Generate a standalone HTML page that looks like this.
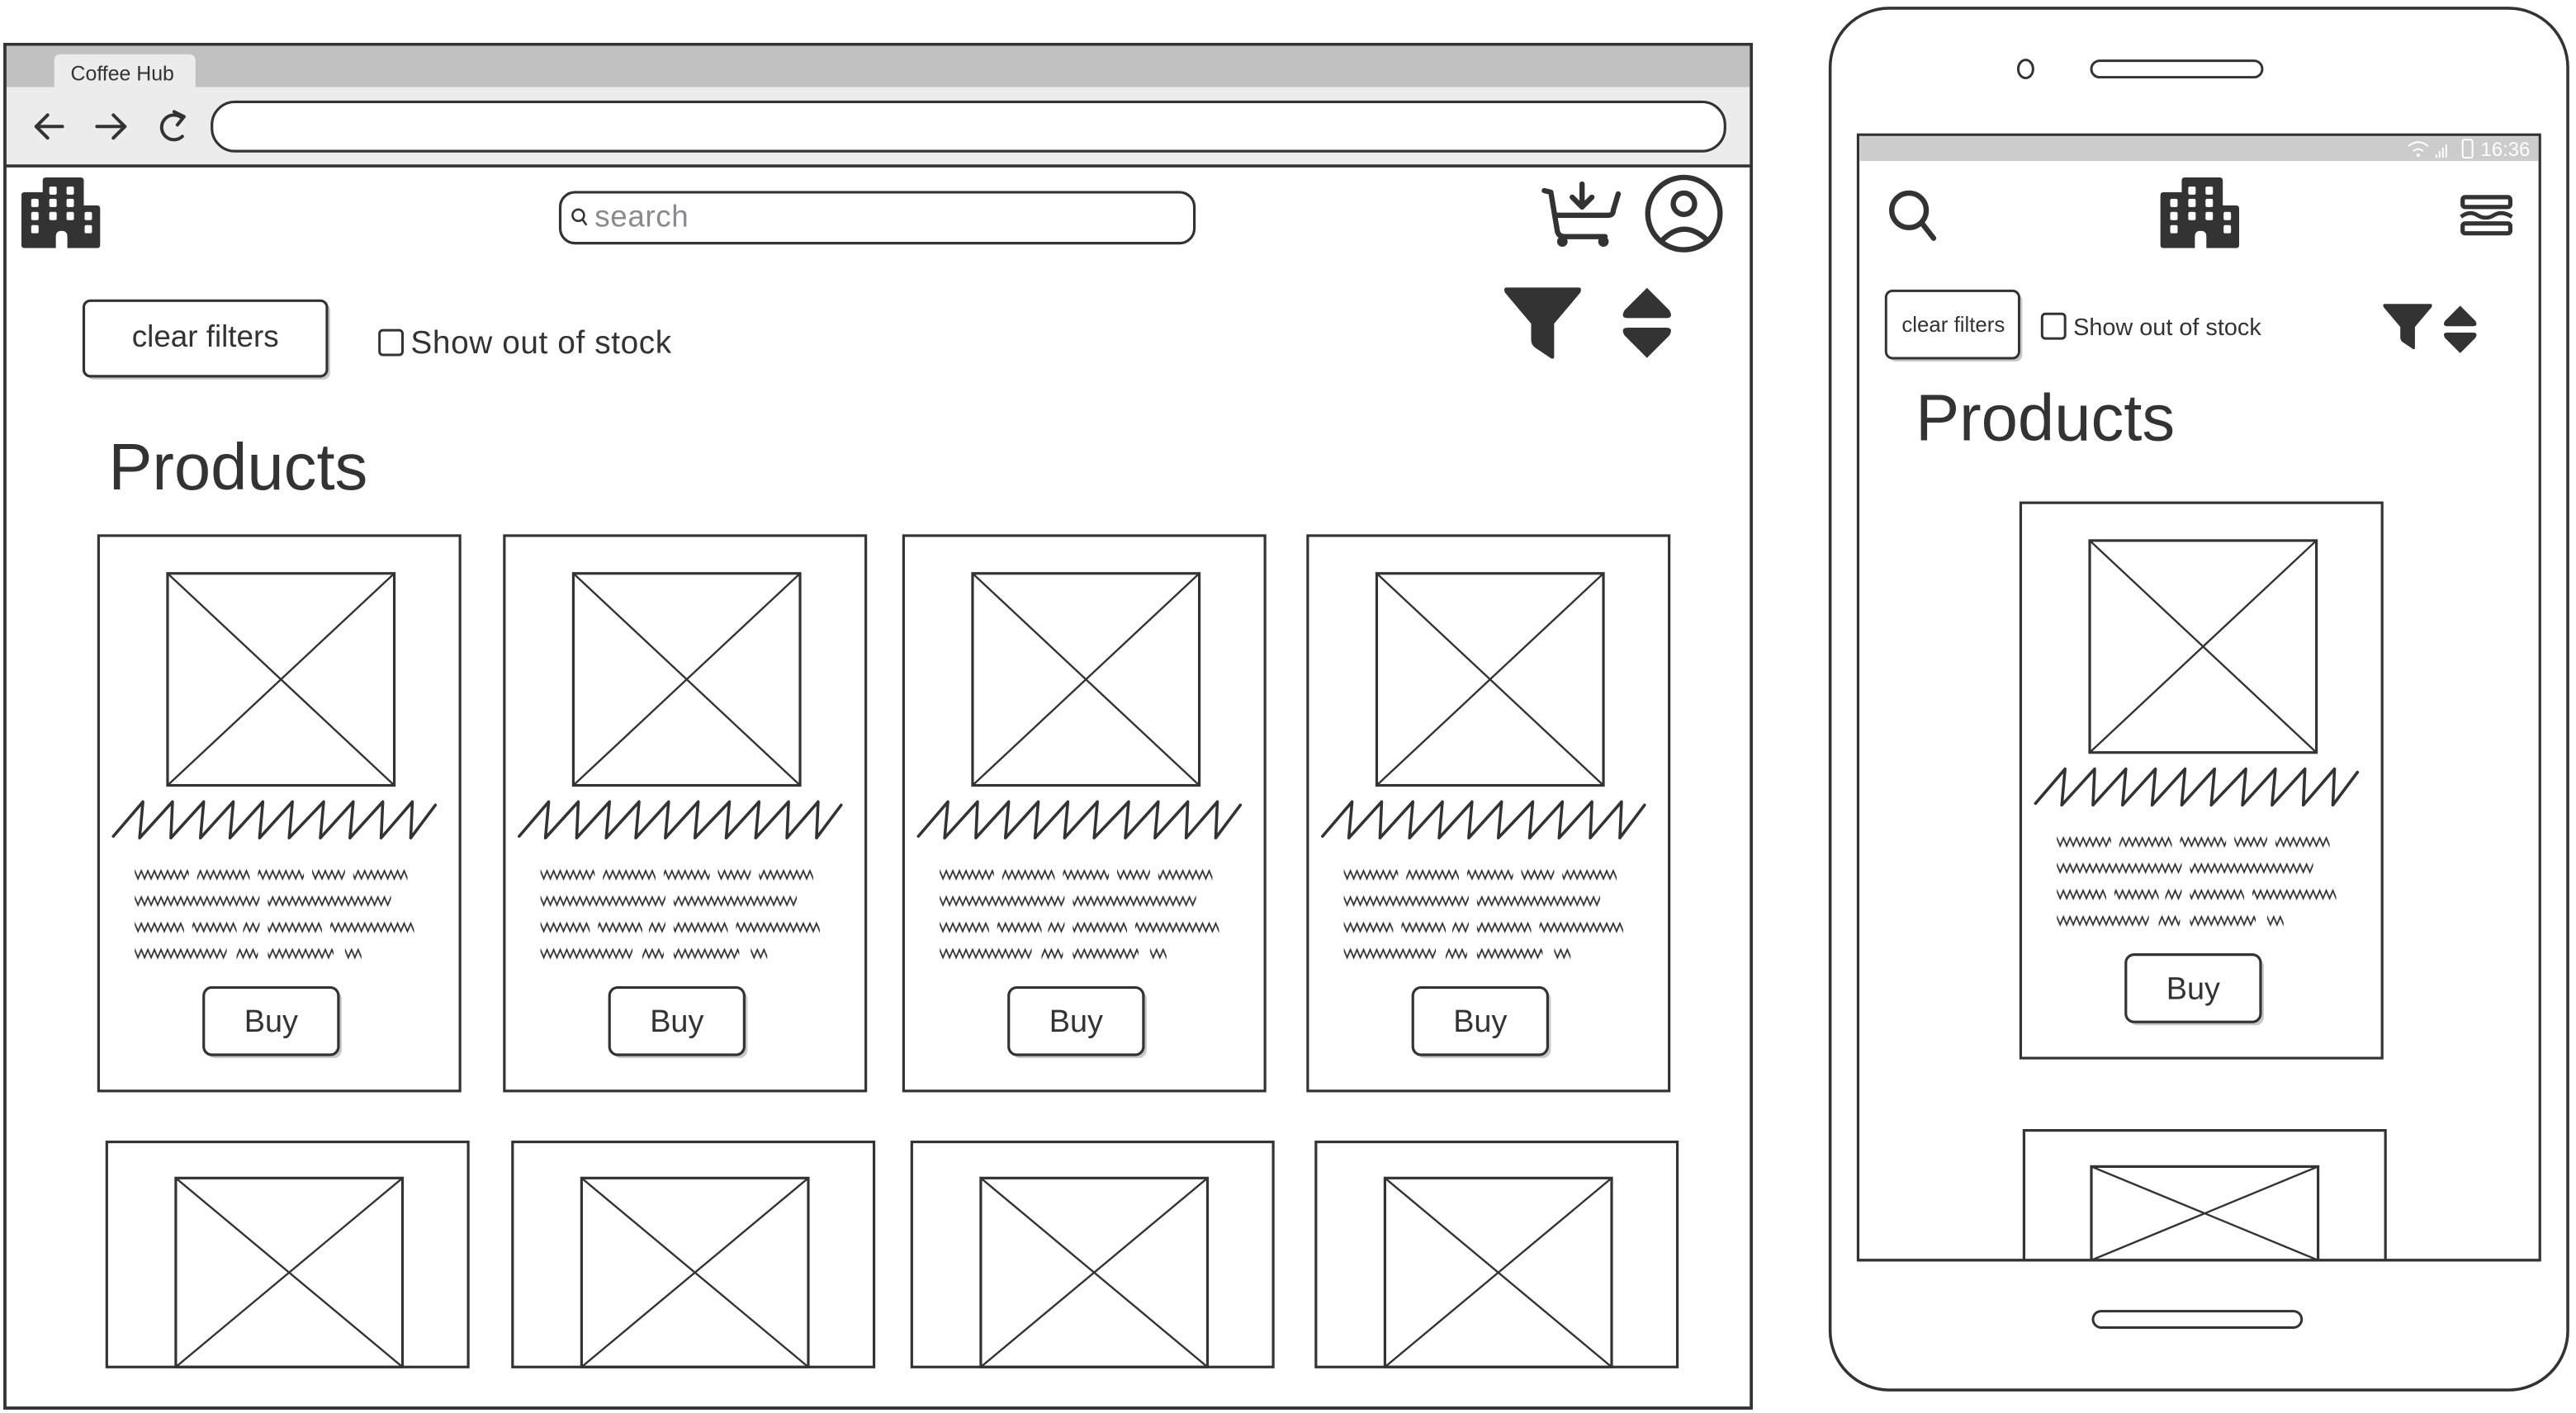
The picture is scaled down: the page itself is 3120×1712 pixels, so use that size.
<!DOCTYPE html>
<html><head><meta charset="utf-8"><style>
html,body{margin:0;padding:0;background:#fff;}
svg{display:block;}
text{font-family:"Liberation Sans",sans-serif;fill:#333;}
</style></head><body>
<svg width="3120" height="1712" viewBox="0 0 1568 860" preserveAspectRatio="none" xmlns="http://www.w3.org/2000/svg">
<defs>
<pattern id="zz" x="0" y="3" width="4" height="8" patternUnits="userSpaceOnUse">
<path d="M-0.5,7 L2,1 L4.5,7" fill="none" stroke="#333" stroke-width="0.9"/>
</pattern>
<symbol id="bld" viewBox="0 0 48 43">
<path d="M13,2 Q13,0 15,0 L36,0 Q38,0 38,2 L38,17 L46,17 Q48,17 48,19 L48,41 Q48,43 46,43 L28,43 L28,36 Q28,32.5 24.5,32.5 Q21,32.5 21,36 L21,43 L2,43 Q0,43 0,41 L0,11 Q0,9 2,9 L13,9 Z" fill="#333"/>
<g fill="#fff">
<rect x="17" y="5.5" width="4.5" height="5" rx="1"/><rect x="27.5" y="5.5" width="4.5" height="5" rx="1"/>
<rect x="6" y="13" width="4.5" height="5" rx="1"/><rect x="17" y="13" width="4.5" height="5" rx="1"/><rect x="27.5" y="13" width="4.5" height="5" rx="1"/>
<rect x="6" y="21" width="4.5" height="5" rx="1"/><rect x="17" y="21" width="4.5" height="5" rx="1"/><rect x="27.5" y="21" width="4.5" height="5" rx="1"/><rect x="38.5" y="21" width="4.5" height="5" rx="1"/>
<rect x="6" y="29" width="4.5" height="5" rx="1"/><rect x="38.5" y="29" width="4.5" height="5" rx="1"/>
</g>
</symbol>
<symbol id="funnel" viewBox="0 0 48 44" overflow="visible">
<path d="M2,0 L46,0 Q48,0 47,3 L31,22 L31,42 Q31,44 29,43 L20,37 Q17,35 17,32 L17,22 L1,3 Q0,0 2,0 Z" fill="#333"/>
</symbol>
<symbol id="sort" viewBox="0 0 32 44" overflow="visible">
<path d="M16,0 L30,14 Q33,19 28,19 L4,19 Q-1,19 2,14 Z M4,25 L28,25 Q33,25 30,30 L16,44 L2,30 Q-1,25 4,25 Z" fill="#333"/>
</symbol>
<g id="txt">
<rect x="22" y="203" width="33" height="8" fill="url(#zz)"/><rect x="60" y="203" width="32" height="8" fill="url(#zz)"/><rect x="97" y="203" width="28" height="8" fill="url(#zz)"/><rect x="130" y="203" width="20" height="8" fill="url(#zz)"/><rect x="155" y="203" width="33" height="8" fill="url(#zz)"/>
<rect x="22" y="219" width="76" height="8" fill="url(#zz)"/><rect x="103" y="219" width="75" height="8" fill="url(#zz)"/>
<rect x="22" y="235" width="30" height="8" fill="url(#zz)"/><rect x="57" y="235" width="27" height="8" fill="url(#zz)"/><rect x="88" y="235" width="10" height="8" fill="url(#zz)"/><rect x="103" y="235" width="33" height="8" fill="url(#zz)"/><rect x="141" y="235" width="51" height="8" fill="url(#zz)"/>
<rect x="22" y="251" width="56" height="8" fill="url(#zz)"/><rect x="84" y="251" width="13" height="8" fill="url(#zz)"/><rect x="103" y="251" width="40" height="8" fill="url(#zz)"/><rect x="150" y="251" width="10" height="8" fill="url(#zz)"/>
</g>
<g id="card">
<rect x="0" y="0" width="220" height="338" fill="#fff" stroke="#333" stroke-width="1.6"/>
<rect x="42" y="23" width="138" height="129" fill="none" stroke="#333" stroke-width="1.6"/>
<path d="M42,23 L180,152 M180,23 L42,152" stroke="#333" stroke-width="1.2"/>
<path d="M9,183 L27,162 L25,184 L45,162 L44,184 L64,162 L62,184 L82,162 L80,184 L100,162 L98,184 L118,162 L116,184 L137,162 L135,184 L155,162 L153,184 L173,162 L172,184 L191,162 L190,184 L205,164" fill="none" stroke="#333" stroke-width="1.8" stroke-linejoin="round" stroke-linecap="round"/>
<use href="#txt"/>
<rect x="66" y="277" width="82" height="41" rx="5" fill="#c8c8c8"/>
<rect x="64" y="275" width="82" height="41" rx="5" fill="#fff" stroke="#333" stroke-width="1.6"/>
<text x="105" y="302" font-size="19" text-anchor="middle">Buy</text>
</g>
<g id="card2">
<rect x="0" y="0" width="220" height="137" fill="#fff" stroke="#333" stroke-width="1.6"/>
<rect x="42" y="22" width="138" height="115" fill="none" stroke="#333" stroke-width="1.6"/>
<path d="M42,22 L180,137 M180,22 L42,137" stroke="#333" stroke-width="1.2"/>
</g>
</defs>

<rect x="3" y="27" width="1063" height="830" fill="#fff" stroke="#333" stroke-width="1.8"/>
<rect x="4" y="28" width="1061" height="25" fill="#c0c0c0"/>
<path d="M33,53 L33,37 Q33,33 37,33 L115,33 Q119,33 119,37 L119,53 Z" fill="#ececec"/>
<text x="43" y="49" font-size="12.5">Coffee Hub</text>
<rect x="4" y="53" width="1061" height="48" fill="#ececec"/>
<line x1="3" y1="101" x2="1066" y2="101" stroke="#333" stroke-width="1.8"/>
<rect x="129" y="62" width="921" height="30" rx="14" fill="#fff" stroke="#333" stroke-width="1.6"/>
<path d="M38,77 L22,77 M29,70 L22,77 L29,84" fill="none" stroke="#333" stroke-width="2" stroke-linecap="round" stroke-linejoin="round"/>
<path d="M59,77 L76,77 M69,70 L76,77 L69,84" fill="none" stroke="#333" stroke-width="2" stroke-linecap="round" stroke-linejoin="round"/>
<path d="M111,72 A7.5,7.5 0 1 0 111,83" fill="none" stroke="#333" stroke-width="2" stroke-linecap="round"/>
<path d="M106,68 L112,71 L108,76" fill="none" stroke="#333" stroke-width="2" stroke-linecap="round" stroke-linejoin="round"/>

<use href="#bld" x="13" y="108" width="48" height="43"/>
<rect x="341" y="117" width="386" height="31" rx="9" fill="#fff" stroke="#333" stroke-width="1.6"/>
<circle cx="352" cy="131" r="3.5" fill="none" stroke="#333" stroke-width="1.3"/>
<line x1="354.5" y1="133.5" x2="357" y2="137" stroke="#333" stroke-width="1.3"/>
<text x="362" y="138" font-size="18.5" style="fill:#8a8a90" letter-spacing="0.3">search</text>

<g fill="none" stroke="#333" stroke-width="3.2" stroke-linecap="round" stroke-linejoin="round">
<path d="M940,116 L944,117 L948,141 Q949,144 952,144 L977,144"/>
<path d="M947,131 L979,131 Q982,131 982,128 L985,118"/>
<path d="M963,112 L963,125 M957,120 L963,126 L969,120"/>
<path d="M1003,130 A22,22 0 1 0 1047,130 A22,22 0 1 0 1003,130 Z"/>
<circle cx="1025" cy="124" r="6.5"/>
<path d="M1012,146 Q1025,133 1039,146"/>
</g>
<circle cx="951" cy="147" r="3.2" fill="#333"/><circle cx="976" cy="147" r="3.2" fill="#333"/>

<rect x="53" y="185" width="148" height="46" rx="4" fill="#c8c8c8"/>
<rect x="51" y="183" width="148" height="46" rx="4" fill="#fff" stroke="#333" stroke-width="1.6"/>
<text x="125" y="211" font-size="18.5" text-anchor="middle">clear filters</text>
<rect x="231" y="201" width="14" height="15" rx="2" fill="#fff" stroke="#333" stroke-width="1.5"/>
<text x="250" y="215" font-size="19.5" letter-spacing="0.3">Show out of stock</text>
<use href="#funnel" x="915" y="175" width="48" height="44"/>
<use href="#sort" x="987" y="175" width="31" height="43"/>

<text x="66" y="298" font-size="40">Products</text>

<use href="#card" x="60" y="326"/>
<use href="#card" x="307" y="326"/>
<use href="#card" x="550" y="326"/>
<use href="#card" x="796" y="326"/>
<use href="#card2" x="65" y="695"/>
<use href="#card2" x="312" y="695"/>
<use href="#card2" x="555" y="695"/>
<use href="#card2" x="801" y="695"/>
<rect x="3" y="27" width="1063" height="830" fill="none" stroke="#333" stroke-width="1.8"/>

<rect x="1114" y="5" width="449" height="841" rx="36" fill="#fff" stroke="#333" stroke-width="1.8"/>
<ellipse cx="1233" cy="42" rx="4.5" ry="5.5" fill="none" stroke="#333" stroke-width="1.5"/>
<rect x="1273" y="37" width="104" height="10" rx="5" fill="none" stroke="#333" stroke-width="1.5"/>
<rect x="1274" y="798" width="127" height="10" rx="5" fill="none" stroke="#333" stroke-width="1.5"/>
<rect x="1131" y="82" width="415" height="685" fill="#fff" stroke="#333" stroke-width="1.6"/>
<rect x="1132" y="83" width="413" height="15" fill="#cccccc"/>
<text x="1540" y="95" font-size="12" text-anchor="end" style="fill:#fff">16:36</text>
<rect x="1499" y="85" width="6" height="11" rx="1" fill="none" stroke="#fff" stroke-width="1"/>
<path d="M1466,89 Q1472,84 1478,89 M1469,92 Q1472,89.5 1475,92" fill="none" stroke="#fff" stroke-width="1"/>
<circle cx="1472" cy="94.5" r="1" fill="#fff"/>
<path d="M1483,96 L1483,94 M1485,96 L1485,92 M1487,96 L1487,90 M1489,96 L1489,88" stroke="#fff" stroke-width="1"/>

<circle cx="1162" cy="128" r="10.5" fill="none" stroke="#333" stroke-width="3.2"/>
<line x1="1170" y1="136" x2="1177" y2="145" stroke="#333" stroke-width="3.2" stroke-linecap="round"/>
<use href="#bld" x="1315" y="108" width="48" height="43"/>
<rect x="1499" y="120" width="29" height="6" rx="1.5" fill="none" stroke="#333" stroke-width="2.6"/>
<rect x="1499" y="136" width="29" height="6" rx="1.5" fill="none" stroke="#333" stroke-width="2.6"/>
<path d="M1498,132 Q1503,128 1508,131 Q1513,134 1518,131 Q1523,128 1529,132" fill="none" stroke="#333" stroke-width="2.4"/>

<rect x="1150" y="179" width="81" height="41" rx="4" fill="#c8c8c8"/>
<rect x="1148" y="177" width="81" height="41" rx="4" fill="#fff" stroke="#333" stroke-width="1.5"/>
<text x="1189" y="202" font-size="13" text-anchor="middle">clear filters</text>
<rect x="1243" y="191" width="14" height="15" rx="2" fill="#fff" stroke="#333" stroke-width="1.5"/>
<text x="1262" y="204" font-size="14.5">Show out of stock</text>
<use href="#funnel" x="1450" y="185" width="31" height="28"/>
<use href="#sort" x="1487" y="186" width="21" height="29"/>
<text x="1166" y="268" font-size="40">Products</text>

<use href="#card" x="1230" y="306"/>
<rect x="1232" y="688" width="220" height="79" fill="#fff" stroke="#333" stroke-width="1.6"/>
<rect x="1273" y="710" width="138" height="57" fill="none" stroke="#333" stroke-width="1.6"/>
<path d="M1273,710 L1411,767 M1411,710 L1273,767" stroke="#333" stroke-width="1.2"/>
<line x1="1131" y1="767" x2="1546" y2="767" stroke="#333" stroke-width="1.6"/>
</svg>
</body></html>
